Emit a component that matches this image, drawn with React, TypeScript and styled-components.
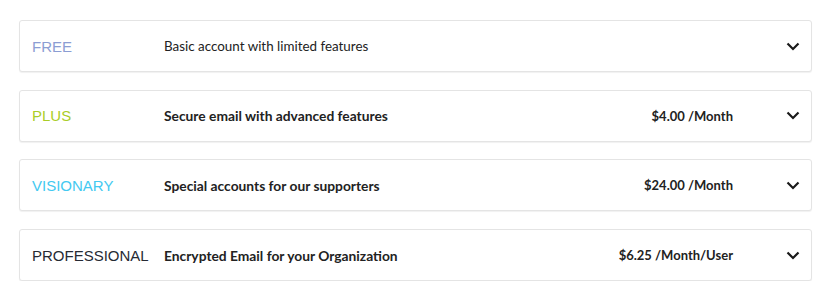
import styled, { createGlobalStyle } from "styled-components";

const GlobalStyle = createGlobalStyle`
  body {
    margin: 0;
    background: #ffffff;
    font-family: "Lato", "Liberation Sans", sans-serif;
  }
`;

type Plan = {
  name: string;
  color: string;
  description: string;
  strong: boolean;
  price?: string;
};

const plans: Plan[] = [
  { name: "FREE", color: "#8b9dd3", description: "Basic account with limited features", strong: false },
  { name: "PLUS", color: "#a9cd28", description: "Secure email with advanced features", strong: true, price: "$4.00 /Month" },
  { name: "VISIONARY", color: "#43c9f1", description: "Special accounts for our supporters", strong: true, price: "$24.00 /Month" },
  { name: "PROFESSIONAL", color: "#262a33", description: "Encrypted Email for your Organization", strong: true, price: "$6.25 /Month/User" },
];

const List = styled.div`
  display: flex;
  flex-direction: column;
  gap: 17.7px;
  padding: 20px 28px 0 19px;
`;

const Card = styled.div`
  display: flex;
  align-items: center;
  height: 50px;
  padding: 0 10px 0 12px;
  border: 1px solid #e4e4e4;
  border-radius: 3px;
  box-shadow: 0 1px 1px rgba(0, 0, 0, 0.06);
  background: #fff;
`;

const Name = styled.div<{ color: string }>`
  width: 132px;
  flex-shrink: 0;
  font-family: "Liberation Sans", Arial, sans-serif;
  font-size: 15px;
  color: ${({ color }) => color};
`;

const Description = styled.div<{ strong: boolean }>`
  flex: 1;
  font-size: ${({ strong }) => (strong ? "13.8px" : "13.4px")};
  font-weight: ${({ strong }) => (strong ? 700 : 400)};
  color: #222;
`;

const Price = styled.div`
  font-size: 13px;
  font-weight: 700;
  color: #222;
`;

const Toggle = styled.div`
  width: 68px;
  display: flex;
  justify-content: flex-end;
  padding-right: 1px;
  box-sizing: border-box;
`;

function Chevron() {
  return (
    <svg width="14" height="9" viewBox="0 0 14 9">
      <path d="M1.5 1.5 L7 7 L12.5 1.5" fill="none" stroke="#1a1a1a" strokeWidth="2.2" />
    </svg>
  );
}

export default function App() {
  return (
    <>
      <GlobalStyle />
      <List>
        {plans.map((p) => (
          <Card key={p.name}>
            <Name color={p.color}>{p.name}</Name>
            <Description strong={p.strong}>{p.description}</Description>
            {p.price && <Price>{p.price}</Price>}
            <Toggle>
              <Chevron />
            </Toggle>
          </Card>
        ))}
      </List>
    </>
  );
}
